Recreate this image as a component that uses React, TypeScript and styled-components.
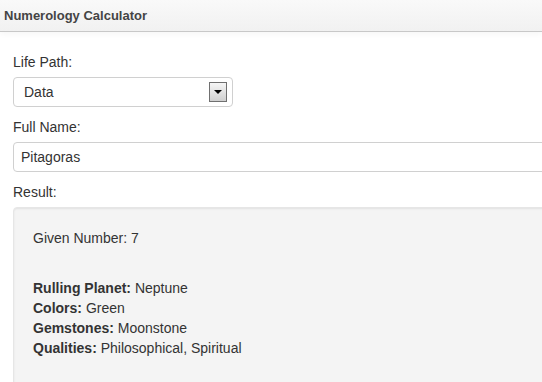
import styled, { createGlobalStyle } from "styled-components";

const GlobalStyle = createGlobalStyle`
  body {
    margin: 0;
    background: #ffffff;
    font-family: "Liberation Sans", Arial, sans-serif;
    color: #333333;
    overflow: hidden;
  }
`;

const Page = styled.div`
  width: 542px;
  height: 382px;
  overflow: hidden;
`;

const Header = styled.div`
  height: 31px;
  display: flex;
  align-items: center;
  padding-left: 4px;
  background: linear-gradient(to bottom, #f9f9f9, #f1f1f1);
  border-bottom: 1px solid #c8c8c8;
  box-shadow: 0 2px 6px rgba(0, 0, 0, 0.04);
`;

const Title = styled.h1`
  margin: 0;
  font-size: 13px;
  font-weight: bold;
  color: #444444;
`;

const Body = styled.div`
  padding: 20px 0 0 13px;
  display: flex;
  flex-direction: column;
  align-items: flex-start;
`;

const Label = styled.label<{ $top?: number }>`
  display: block;
  font-size: 14px;
  line-height: 20px;
  color: #333333;
  margin-top: ${(p) => p.$top ?? 0}px;
`;

const Select = styled.div`
  box-sizing: border-box;
  margin-top: 5px;
  width: 220px;
  height: 30px;
  border: 1px solid #d0d0d0;
  border-radius: 4px;
  display: flex;
  align-items: center;
  justify-content: space-between;
  padding: 0 5px 0 10px;
  font-size: 14px;
  color: #333333;
`;

const DropButton = styled.span`
  box-sizing: border-box;
  width: 18px;
  height: 20px;
  border: 1px solid #707070;
  background: linear-gradient(to bottom, #f6f6f6, #cfcfcf);
  display: flex;
  align-items: center;
  justify-content: center;
`;

const Arrow = styled.span`
  width: 0;
  height: 0;
  border-left: 4px solid transparent;
  border-right: 4px solid transparent;
  border-top: 4px solid #000000;
`;

const TextInput = styled.input`
  box-sizing: border-box;
  margin-top: 5px;
  width: 600px;
  height: 30px;
  border: 1px solid #d0d0d0;
  border-radius: 4px;
  padding: 0 7px;
  font-family: "Liberation Sans", Arial, sans-serif;
  font-size: 14px;
  color: #333333;
  outline: none;
`;

const ResultBox = styled.div`
  box-sizing: border-box;
  margin-top: 5px;
  width: 600px;
  height: 200px;
  background: #f4f4f4;
  border: 1px solid #e6e6e6;
  border-radius: 4px;
  box-shadow: inset 0 1px 2px rgba(0, 0, 0, 0.08);
  padding: 20px 19px;
  font-size: 14px;
  line-height: 20px;
  color: #333333;
`;

const Line = styled.div<{ $gap?: number }>`
  margin-top: ${(p) => p.$gap ?? 0}px;
`;

const Key = styled.b`
  font-weight: bold;
`;

const facts = [
  ["Rulling Planet:", "Neptune"],
  ["Colors:", "Green"],
  ["Gemstones:", "Moonstone"],
  ["Qualities:", "Philosophical, Spiritual"],
];

export default function App() {
  return (
    <Page>
      <GlobalStyle />
      <Header>
        <Title>Numerology Calculator</Title>
      </Header>
      <Body>
        <Label>Life Path:</Label>
        <Select>
          Data
          <DropButton>
            <Arrow />
          </DropButton>
        </Select>
        <Label $top={10}>Full Name:</Label>
        <TextInput defaultValue="Pitagoras" readOnly />
        <Label $top={10}>Result:</Label>
        <ResultBox>
          <Line>Given Number: 7</Line>
          {facts.map(([k, v], i) => (
            <Line key={k} $gap={i === 0 ? 30 : 0}>
              <Key>{k}</Key> {v}
            </Line>
          ))}
        </ResultBox>
      </Body>
    </Page>
  );
}
